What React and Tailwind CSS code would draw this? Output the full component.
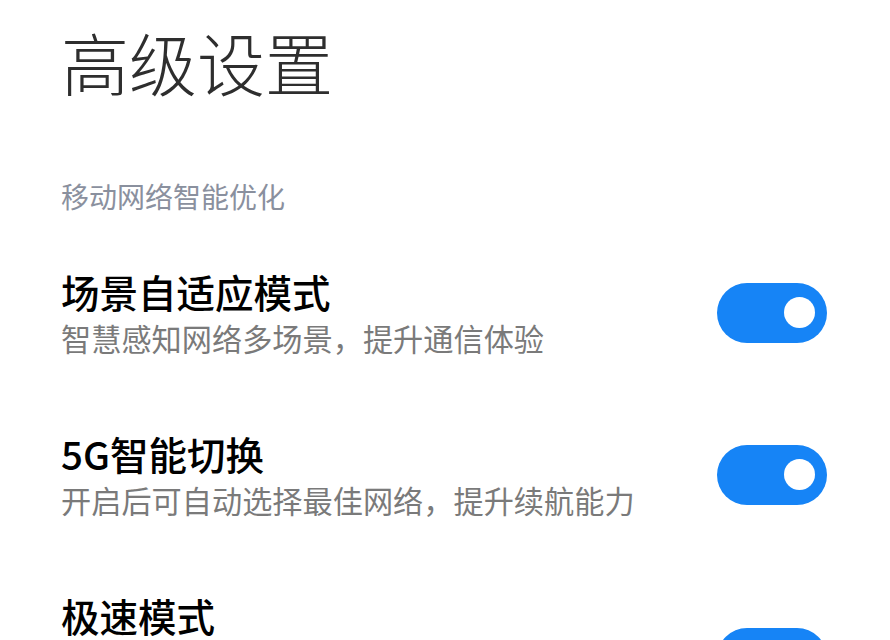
import React, { useState } from "react";

const font = { fontFamily: '"Noto Sans CJK SC", "Noto Sans", sans-serif' };

function Toggle({ on, onChange }) {
  return (
    <button
      onClick={() => onChange(!on)}
      className={`flex items-center w-[110px] h-[60px] rounded-full px-[12px] shrink-0 ${
        on ? "bg-[#1684f6] justify-end" : "bg-[#d9d9d9] justify-start"
      }`}
      aria-label="toggle"
    >
      <span className="block w-[31px] h-[31px] rounded-full bg-white" />
    </button>
  );
}

export default function App() {
  const [items, setItems] = useState([
    { id: 1, title: "场景自适应模式", desc: "智慧感知网络多场景，提升通信体验", on: true },
    { id: 2, title: "5G智能切换", desc: "开启后可自动选择最佳网络，提升续航能力", on: true },
    // description runs below the fold (two lines), only the title is visible
    { id: 3, title: "极速模式", desc: "", on: true },
  ]);

  function toggle(id, v) {
    setItems((s) => s.map((i) => (i.id === id ? { ...i, on: v } : i)));
  }

  return (
    <div className="w-[890px] h-[640px] overflow-hidden bg-white pl-[61px] pr-[63px]" style={font}>
      <h1 className="pt-[28px] text-[68px] leading-[68px] font-light text-[#2e2e2e]">高级设置</h1>

      <div className="mt-[86px] text-[28px] leading-[28px] text-[#8a909e]">移动网络智能优化</div>

      <div className="mt-[62px] flex flex-col gap-[81px]">
        {items.map((it) => (
          <div key={it.id} className="flex items-center justify-between">
            <div>
              <div className="text-[38.5px] leading-[38px] font-medium text-black">{it.title}</div>
              {it.desc ? (
                <div className="mt-[13px] text-[30.2px] leading-[30px] text-[#7a7a7a]">{it.desc}</div>
              ) : (
                <div className="mt-[13px] h-[72px]" />
              )}
            </div>
            <Toggle on={it.on} onChange={(v) => toggle(it.id, v)} />
          </div>
        ))}
      </div>
    </div>
  );
}
